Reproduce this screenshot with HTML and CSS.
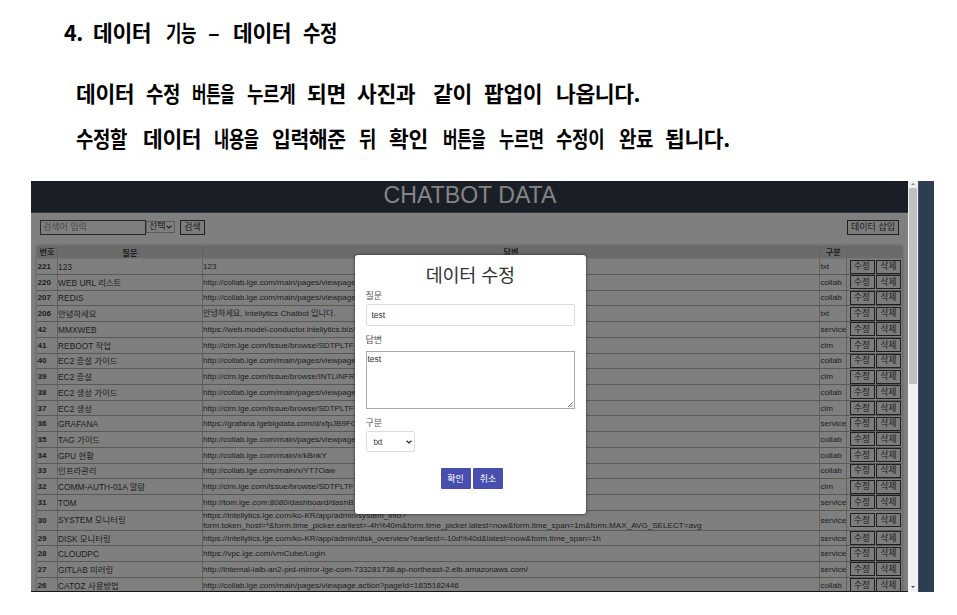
FILE: index.html
```html
<!DOCTYPE html>
<html lang="ko">
<head>
<meta charset="utf-8">
<title>데이터 수정</title>
<link rel="stylesheet" href="styles.css">
</head>
<body>
<section class="guide">
<h1><span>4.</span><span>데이터</span><span class="n4">기능</span><span>–</span><span>데이터</span><span class="n5">수정</span></h1>
<p class="first"><span>데이터</span><span class="n5">수정</span><span class="n1">버튼을</span><span class="n3">누르게</span><span>되면</span><span>사진과</span><span>같이</span><span>팝업이</span><span>나옵니다.</span></p>
<p class="second"><span class="n5">수정할</span><span>데이터</span><span class="n2">내용을</span><span class="n6">입력해준</span><span class="n5">뒤</span><span>확인</span><span class="n1">버튼을</span><span class="n2">누르면</span><span class="n3">수정이</span><span class="n5">완료</span><span>됩니다.</span></p>
</section>
<main class="shot">
<div class="app">
<header>CHATBOT DATA</header>
<div class="toolbar"><span class="search">검색어 입력</span><span class="pick">선택<svg viewBox="0 0 6 4"><path d="M.6.7 3 3 5.4.7"/></svg></span><button class="find">검색</button><button class="insert">데이터 삽입</button></div>
<div class="table" id="table">
<div class="row head"><b>번호</b><b>질문</b><b>답변</b><b>구분</b><b></b></div>
</div>
</div>
<div class="scroll"><i class="up"></i><div class="thumb"></div><i class="down"></i></div>
<div class="edge"></div>
<div class="modal">
<h2>데이터 수정</h2>
<label>질문</label>
<div class="field">test</div>
<label class="l2">답변</label>
<div class="area">test<svg viewBox="0 0 6 6"><path d="M0 6 6 0M3 6 6 3"/></svg></div>
<label class="l3">구분</label>
<div class="select">txt<svg viewBox="0 0 6 4"><path d="M.6.7 3 3 5.4.7"/></svg></div>
<div class="actions"><button>확인</button><button>취소</button></div>
</div>
</main>
<script src="rows.js"></script>
</body>
</html>
```
FILE: rows.js
```js
const collab = "http://collab.lge.com/main/pages/viewpage";
const clm = "http://clm.lge.com/issue/browse/";
const rows = [
  [221, "123", "123", "txt"],
  [220, "WEB URL 리스트", collab, "collab"],
  [207, "REDIS", collab, "collab"],
  [206, "안녕하세요", "안녕하세요, Intellytics Chatbot 입니다.", "txt"],
  [42, "MMXWEB", "https://web.model-conductor.intellytics.biz/", "service"],
  [41, "REBOOT 작업", clm + "SDTPLTF", "clm"],
  [40, "EC2 증설 가이드", collab, "collab"],
  [39, "EC2 증설", clm + "INTLINFR", "clm"],
  [38, "EC2 생성 가이드", collab, "collab"],
  [37, "EC2 생성", clm + "SDTPLTF", "clm"],
  [36, "GRAFANA", "https://grafana.lgebigdata.com/d/xfpJB9FC", "service"],
  [35, "TAG 가이드", collab, "collab"],
  [34, "GPU 현황", "http://collab.lge.com/main/x/kBnkY", "collab"],
  [33, "인프라관리", "http://collab.lge.com/main/x/YT7Oaw", "collab"],
  [32, "COMM-AUTH-01A 알람", clm + "SDTPLTF", "clm"],
  [31, "TOM", "http://tom.lge.com:8080/dashboard/dashB", "service"],
  [30, "SYSTEM 모니터링", "https://intellytics.lge.com/ko-KR/app/admin/system_info?\nform.token_host=*&form.time_picker.earliest=-4h%40m&form.time_picker.latest=now&form.time_span=1m&form.MAX_AVG_SELECT=avg", "service"],
  [29, "DISK 모니터링", "https://intellytics.lge.com/ko-KR/app/admin/disk_overview?earliest=-10d%40d&latest=now&form.time_span=1h", "service"],
  [28, "CLOUDPC", "https://vpc.lge.com/vmCube/Login", "service"],
  [27, "GITLAB 미러링", "http://internal-ialb-an2-prd-mirror-lge-com-733281738.ap-northeast-2.elb.amazonaws.com/", "service"],
  [26, "CATOZ 사용방법", collab + ".action?pageId=1835182446", "collab"]
];
const table = document.getElementById("table");
for (const [id, question, answer, type] of rows) {
  const row = document.createElement("div");
  row.className = id === 30 ? "row tall" : "row";
  for (const text of [id, question, answer, type]) {
    const cell = document.createElement("span");
    cell.textContent = text;
    row.append(cell);
  }
  const tools = document.createElement("span");
  tools.className = "tools";
  for (const name of ["수정", "삭제"]) {
    const button = document.createElement("button");
    button.textContent = name;
    tools.append(button);
  }
  row.append(tools);
  table.append(row);
}
```
FILE: styles.css
```css
* { box-sizing: border-box; }
body { margin: 0; width: 957px; height: 615px; overflow: hidden; background: #fff; color: #000; font-family: "Liberation Sans", "Noto Sans CJK KR", sans-serif; }
button { font: inherit; color: inherit; border-radius: 0; padding: 0; margin: 0; }
.guide { height: 181px; padding: 15px 0 0 64px; font-family: "Noto Sans CJK KR", sans-serif; }
.guide h1, .guide p { display: grid; justify-items: start; margin: 0; font-size: 21.5px; line-height: 34px; font-weight: 700; white-space: nowrap; letter-spacing: -.4px; }
.guide h1 { grid-template-columns: 29px 73px 42px 25px 70px 60px; }
.guide .first { padding: 27px 0 0 12px; grid-template-columns: 70px 46px 55px 60px 50px 76px 51px 72px 90px; }
.guide .second { padding: 11px 0 0 12px; grid-template-columns: 67px 71px 58px 87px 30px 54px 56px 57px 63px 46px 80px; }
.guide span { transform-origin: left; }
.n1 { transform: scaleX(.73); } .n2 { transform: scaleX(.77); } .n3 { transform: scaleX(.83); }
.n4 { transform: scaleX(.78); } .n5 { transform: scaleX(.88); } .n6 { transform: scaleX(.95); }
.shot { position: relative; display: flex; width: 903px; height: 411px; margin-left: 31px; overflow: hidden; }
.app { width: 877px; background: #7f7f7f; border-bottom: 1px solid #15191f; overflow: hidden; color: #202020; }
header { height: 31.5px; background: #1a1f27; border-bottom: 1px solid #30363e; color: #858585; font-size: 23.1px; line-height: 29px; text-align: center; padding-left: 1px; }
.toolbar { display: flex; height: 33.5px; padding: 7px 9px 0 9px; font-size: 9px; line-height: 11px; align-items: flex-start; }
.search { width: 106px; height: 15px; border: 1px solid #292929; padding: 1px 2px; color: #4b4b4b; }
.pick { display: flex; align-items: center; justify-content: space-between; width: 29px; height: 12px; margin-top: 1px; border: 1px solid #5b5b5b; padding: 0 2px; }
svg { fill: none; stroke: #222; stroke-width: 1.2; width: 6px; height: 4px; }
.find, .insert { height: 15px; background: #7c7c7c; border: 1px solid #202020; line-height: 11px; }
.find { width: 25px; margin-left: 5px; }
.insert { width: 52px; margin-left: auto; }
.table { width: 865px; margin-left: 6px; box-shadow: 0 0 3px #555; font-size: 8.12px; }
.row { display: grid; grid-template-columns: 20.5px 145px 617.5px 27px 55px; height: 15.73px; border-bottom: 1px solid #5c5852; line-height: 10px; }
.row > * { display: flex; align-items: center; white-space: pre; border-right: 1px solid #666159; padding: 1px 0 0 .5px; overflow: hidden; }
.row > :nth-child(2) { font-size: 8.4px; }
.row > :last-child { border-right: 0; }
.row > :first-child { font-weight: 700; }
.head { height: 13.2px; background: #6b6b6b; border-bottom-color: #747474; }
.head > * { justify-content: center; }
.tall { height: 20px; line-height: 9.6px; }
.row .tools { gap: 1.5px; padding: 0 0 0 2.5px; font-size: 8.6px; }
.tools button { width: 25px; height: 14px; border: 1px solid #202020; background: #7c7c7c; line-height: 11px; }
.scroll { display: flex; flex-direction: column; align-items: center; width: 9.5px; background: #f1f1f1; padding: 2px 0 4px; }
.up, .down { border: 2px solid transparent; }
.up { border-bottom-color: #888; border-top: 0; margin-bottom: 3px; }
.down { border-top-color: #444; border-bottom: 0; margin-top: auto; }
.thumb { width: 8px; height: 196px; background: #c1c1c1; }
.edge { flex: 1; background: #2e3e50; border-left: 1px solid #456; }
.modal { position: absolute; left: 323.5px; top: 74px; width: 231.5px; height: 259px; padding: 6px 11px; border-radius: 3px; background: #fff; box-shadow: 0 0 3px #222; color: #333; font-size: 8.5px; }
.modal h2 { margin: 0; text-align: center; font: 400 18.5px/26px "Noto Sans CJK KR", sans-serif; letter-spacing: -.2px; }
.modal label { display: block; margin-top: 3px; height: 14px; line-height: 12px; color: #555; font-size: 9px; }
.field { height: 22px; border: 1px solid #ddd; border-radius: 2px; padding: 0 5px; line-height: 20px; width: 209px; }
.modal .l2 { margin-top: 7px; height: 18px; line-height: 14px; }
.area { position: relative; height: 58px; width: 209px; border: 1px solid #aaa; padding: 2px 1px; line-height: 10px; }
.area svg { position: absolute; right: 1px; bottom: 1px; width: 5px; height: 5px; stroke: #777; }
.modal .l3 { margin-top: 7px; height: 15px; line-height: 14px; }
.select { display: flex; align-items: center; justify-content: space-between; width: 49px; height: 21px; border: 1px solid #ddd; border-radius: 2px; padding: 0 2px 0 7px; }
.actions { display: flex; justify-content: center; gap: 2.5px; margin-top: 16px; padding-left: 3px; }
.actions button { width: 30px; height: 21px; border: 0; border-radius: 1px; background: #474eae; color: #fff; font-size: 9px; }
```
